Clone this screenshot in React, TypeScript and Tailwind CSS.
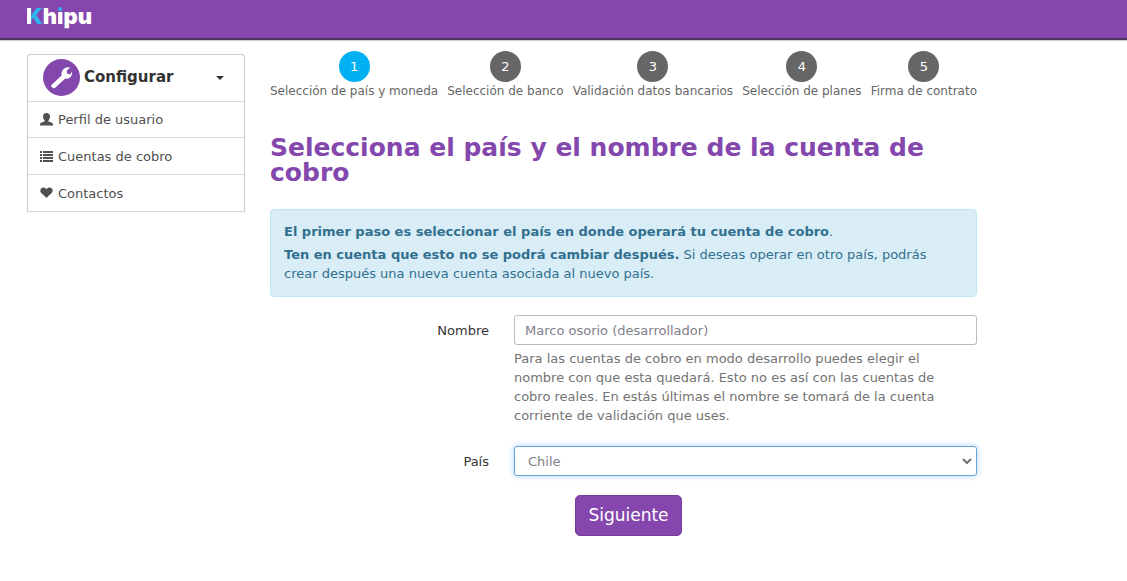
import { useState } from "react";
import type { ReactNode } from "react";

const steps = [
  "Selección de país y moneda",
  "Selección de banco",
  "Validación datos bancarios",
  "Selección de planes",
  "Firma de contrato",
];

function WrenchIcon() {
  return (
    <svg viewBox="0 0 37 37" className="size-[37px] shrink-0" aria-hidden="true">
      <circle cx="18.5" cy="18.5" r="18.5" fill="#8347ad" />
      <path
        fill="#fff"
        d="M8.200 26.200 18.600 16.400C17.900 12.600 20.200 8.900 24 8.200L27.200 8.400 23.600 12 24.400 14.800 27.200 15.400 28.900 12.600 29.200 14.500C28.800 18 25.400 20.500 22 19.700L11.600 29.200Q10.400 29.700 9.500 28.700L8.300 27.500Q7.700 26.800 8.200 26.200Z"
      />
    </svg>
  );
}

function UserIcon() {
  return (
    <svg viewBox="0 0 13 13" className="size-[13px]" fill="currentColor" aria-hidden="true">
      <path d="M6.500 0C8.700 0 10 1.300 10 3.400 10 5 9.300 6.300 8.500 7.200V8.400L12 9.800Q13 10.300 13 11.300V12.500H0V11.300Q0 10.300 1 9.800L4.500 8.400V7.200C3.700 6.300 3 5 3 3.400 3 1.300 4.300 0 6.500 0Z" />
    </svg>
  );
}

function ListIcon() {
  return (
    <svg viewBox="0 0 13 13" className="size-[13px]" fill="currentColor" aria-hidden="true">
      <path d="M0 1h2v2H0zM3 1h10v2H3zM0 4h2v2H0zM3 4h10v2H3zM0 7h2v2H0zM3 7h10v2H3zM0 10h2v2H0zM3 10h10v2H3z" />
    </svg>
  );
}

function HeartIcon() {
  return (
    <svg viewBox="0 0 13 13" className="size-[13px]" fill="currentColor" aria-hidden="true">
      <path d="M6.500 2.200C7.100 1 8.300.5 9.700.5 11.500.5 12.700 1.900 12.700 3.600 12.700 6.200 9.500 7.800 6.500 11 3.500 7.800.3 6.200.3 3.600.3 1.900 1.500.5 3.300.5 4.700.5 5.900 1 6.500 2.200Z" />
    </svg>
  );
}

function SideLink({ icon, children }: { icon: ReactNode; children: ReactNode }) {
  return (
    <li className="border-b border-[#d8d8d8]">
      <a href="#" className="flex h-9 items-center gap-[5px] px-3 text-[#505050]">
        {icon}
        {children}
      </a>
    </li>
  );
}

export default function App() {
  const [name, setName] = useState("Marco osorio (desarrollador)");
  const [open, setOpen] = useState(true);

  return (
    <div className="bg-white font-['Verdana','DejaVu_Sans',sans-serif] text-[13px] leading-[19px] text-[#333]">
      <header className="flex h-10 items-start border-b-2 border-[#4c3560] bg-[#8547ad] px-[26px] shadow-[0_1px_0_#ccc]">
        <a
          href="#"
          className="flex pt-0.5 font-['Inter',sans-serif] text-[22px] leading-7 font-black text-white"
        >
          <span className="bg-linear-[90deg,#fff_5px,#2fb4ee_5px] bg-clip-text text-transparent">K</span>
          <span>h</span>
          <span className="bg-linear-[180deg,#2fb4ee_10px,#fff_10px] bg-clip-text text-transparent">i</span>
          <span>pu</span>
        </a>
      </header>

      <div className="flex max-w-[1004px] items-start gap-[25px] px-[27px] pt-[11px]">
        <nav className="mt-[3px] w-[218px] shrink-0 rounded-t border border-b-0 border-[#ccc]">
          <button
            type="button"
            aria-expanded={open}
            onClick={() => setOpen(!open)}
            className="flex h-[47px] w-full items-center gap-1 border-b border-[#d8d8d8] pr-5 pb-px pl-[15px] text-left text-[15px] font-bold"
          >
            <WrenchIcon />
            <span className="grow">Configurar</span>
            <svg viewBox="0 0 8 4" className="h-1 w-2" aria-hidden="true">
              <path d="M0 0h8L4 4z" fill="#333" />
            </svg>
          </button>
          {open && (
            <ul className="-mt-px">
              <SideLink icon={<UserIcon />}>Perfil de usuario</SideLink>
              <SideLink icon={<ListIcon />}>Cuentas de cobro</SideLink>
              <SideLink icon={<HeartIcon />}>Contactos</SideLink>
            </ul>
          )}
        </nav>

        <main className="min-w-0 grow">
          <ol className="flex justify-between text-[12px] whitespace-nowrap text-[#666]">
            {steps.map((label, i) => (
              <li key={label} className="flex flex-col items-center">
                <span
                  className={
                    i === 0
                      ? "flex size-[31px] items-center justify-center rounded-full bg-[#00b0f0] text-[13px] text-white"
                      : "flex size-[31px] items-center justify-center rounded-full bg-[#666] text-[13px] text-white"
                  }
                >
                  {i + 1}
                </span>
                <span>{label}</span>
              </li>
            ))}
          </ol>

          <h1 className="mt-[34px] text-[25px] leading-[25px] font-bold text-[#8347ad]">
            Selecciona el país y el nombre de la cuenta de cobro
          </h1>

          <div className="mt-6 rounded border border-[#bce8f1] bg-[#d9edf7] px-[13px] pt-3 pb-[13px] text-[#31708f]">
            <p>
              <strong>El primer paso es seleccionar el país en donde operará tu cuenta de cobro</strong>.
            </p>
            <p className="mt-1">
              <strong>Ten en cuenta que esto no se podrá cambiar después.</strong> Si deseas operar en otro
              país, podrás crear después una nueva cuenta asociada al nuevo país.
            </p>
          </div>

          <form className="mt-[18px]" onSubmit={(e) => e.preventDefault()}>
            <div className="grid grid-cols-[219px_1fr] gap-x-[25px]">
              <label htmlFor="nombre" className="pt-1.5 text-right">
                Nombre
              </label>
              <div>
                <input
                  id="nombre"
                  type="text"
                  value={name}
                  onChange={(e) => setName(e.target.value)}
                  className="block h-[30px] w-full rounded-[3px] border border-[#bbb] px-2.5 text-[#80808a] outline-none"
                />
                <p className="mt-1 pr-[25px] text-[#737373]">
                  Para las cuentas de cobro en modo desarrollo puedes elegir el nombre con que esta quedará.
                  Esto no es así con las cuentas de cobro reales. En estás últimas el nombre se tomará de la
                  cuenta corriente de validación que uses.
                </p>
              </div>
            </div>

            <div className="mt-[21px] grid grid-cols-[219px_1fr] gap-x-[25px]">
              <label htmlFor="pais" className="pt-1.5 text-right">
                País
              </label>
              <div className="relative">
                <select
                  id="pais"
                  className="block h-[30px] w-full appearance-none rounded-[3px] border border-[#66a5dc] bg-white pr-7 pl-[13px] text-[#80808a] shadow-[0_0_6px_#a8d2f5] outline-none"
                >
                  <option>Chile</option>
                </select>
                <svg
                  viewBox="0 0 10 6"
                  className="pointer-events-none absolute top-3 right-[5px] h-1.5 w-2.5"
                  aria-hidden="true"
                >
                  <path d="m1 1 4 4 4-4" fill="none" stroke="#70707a" strokeWidth="2" />
                </svg>
              </div>
            </div>

            <div className="mt-[19px] flex justify-center pl-2.5">
              <button
                type="submit"
                className="h-[41px] rounded-[5px] border border-[#733d99] bg-[#8547ad] px-3 text-[17px] text-white"
              >
                Siguiente
              </button>
            </div>
          </form>
        </main>
      </div>
    </div>
  );
}
